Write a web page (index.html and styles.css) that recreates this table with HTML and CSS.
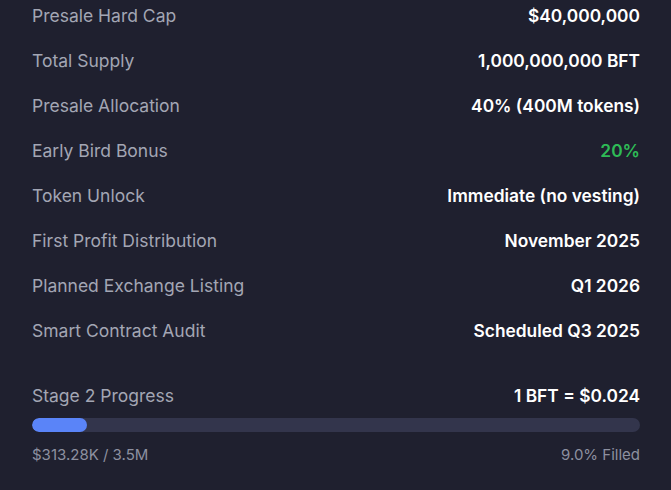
FILE: index.html
```html
<!DOCTYPE html>
<html>
<head>
<meta charset="utf-8">
<link rel="stylesheet" href="styles.css">
</head>
<body>
<div class="card">
  <div class="rows">
    <div class="row"><span class="label">Presale Hard Cap</span><span class="value">$40,000,000</span></div>
    <div class="row"><span class="label">Total Supply</span><span class="value">1,000,000,000 BFT</span></div>
    <div class="row"><span class="label">Presale Allocation</span><span class="value">40% (400M tokens)</span></div>
    <div class="row"><span class="label">Early Bird Bonus</span><span class="value green">20%</span></div>
    <div class="row"><span class="label">Token Unlock</span><span class="value">Immediate (no vesting)</span></div>
    <div class="row"><span class="label">First Profit Distribution</span><span class="value">November 2025</span></div>
    <div class="row"><span class="label">Planned Exchange Listing</span><span class="value">Q1 2026</span></div>
    <div class="row"><span class="label">Smart Contract Audit</span><span class="value">Scheduled Q3 2025</span></div>
  </div>
  <div class="progress">
    <div class="row"><span class="label">Stage 2 Progress</span><span class="value">1 BFT = $0.024</span></div>
    <div class="track"><div class="fill" style="width: 9%"></div></div>
    <div class="row small"><span>$313.28K / 3.5M</span><span>9.0% Filled</span></div>
  </div>
</div>
</body>
</html>
```
FILE: styles.css
```css
html, body {
  margin: 0;
  padding: 0;
  background: #1f202f;
  height: 100%;
}
body {
  font-family: Inter, "Noto Sans", sans-serif;
}
.card {
  padding: 3.5px 31px 0 32px;
}
.rows {
  display: flex;
  flex-direction: column;
  gap: 21.15px;
}
.row {
  display: flex;
  justify-content: space-between;
  align-items: center;
  font-size: 17.5px;
  line-height: 24px;
}
.label {
  color: #a3a6b4;
}
.value {
  color: #ffffff;
  font-weight: 600;
  font-size: 17.35px;
}
.value.green {
  color: #2ebb56;
}
.progress {
  margin-top: 40.5px;
  display: flex;
  flex-direction: column;
}
.track {
  margin-top: 10px;
  height: 14px;
  border-radius: 7px;
  background: #33354c;
  overflow: hidden;
}
.fill {
  height: 100%;
  background: #5a84f8;
  border-radius: 7px;
}
.row.small {
  margin-top: 13px;
  font-size: 15px;
  line-height: 20px;
  color: #8d90a0;
}
```
